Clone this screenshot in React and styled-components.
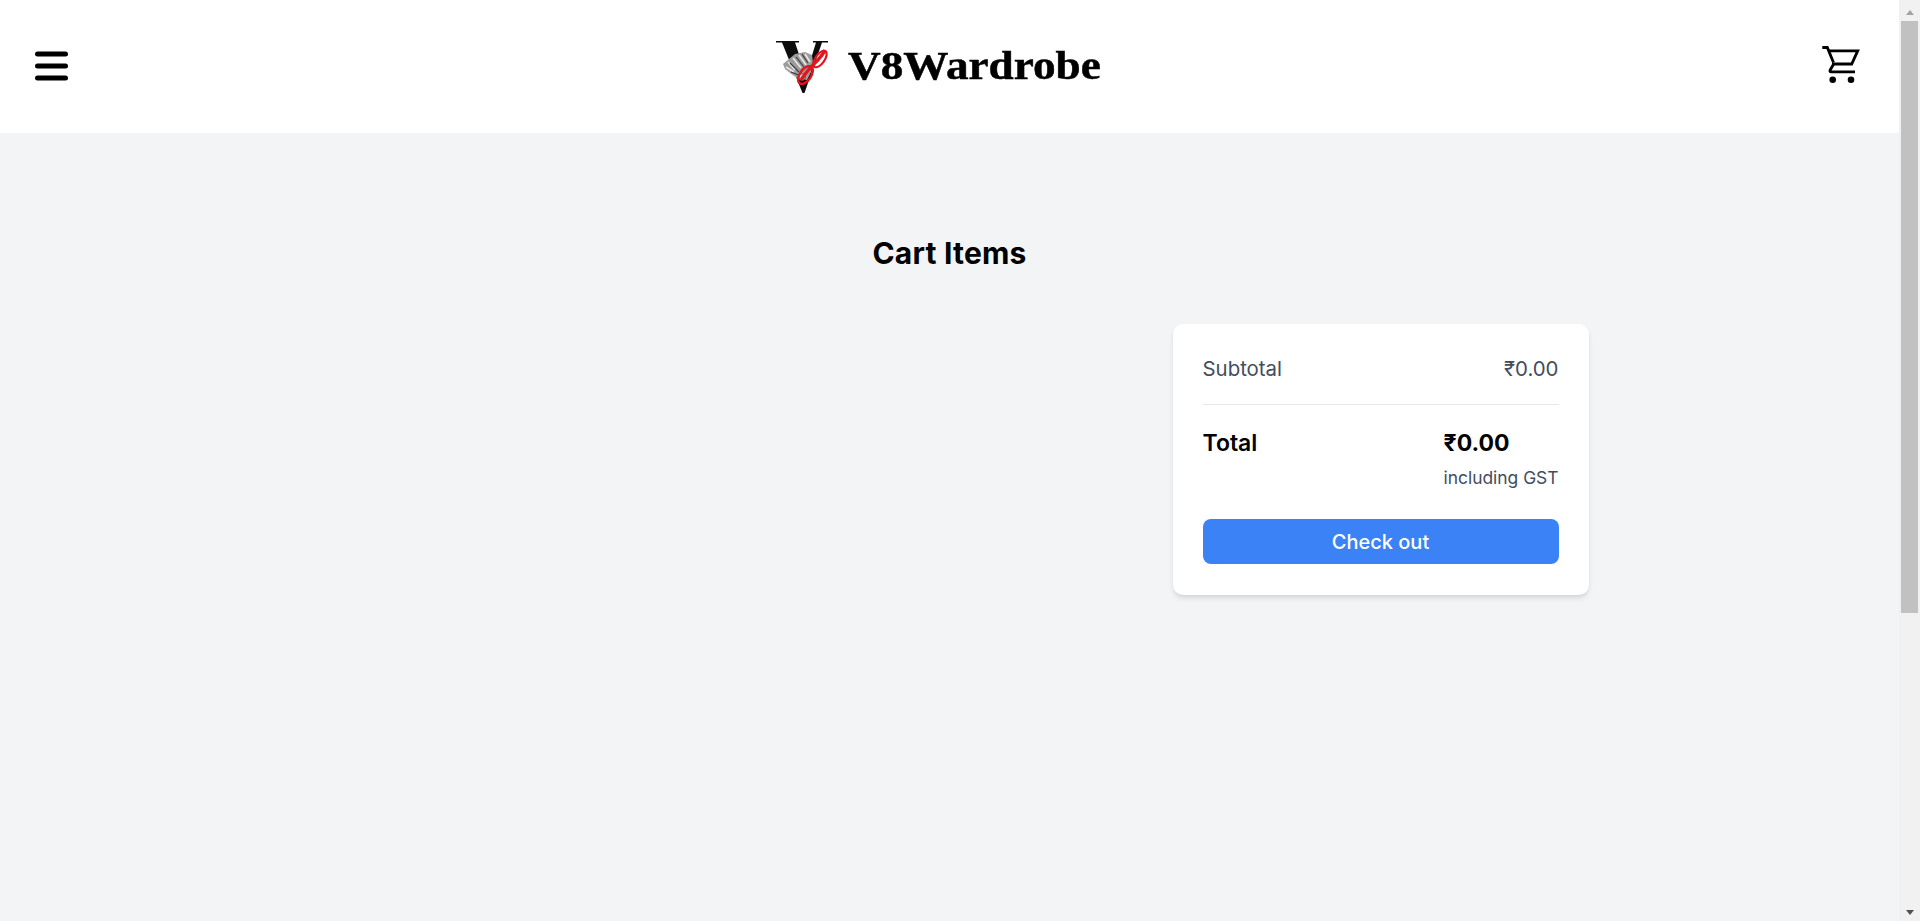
import React from 'react';
import styled, { createGlobalStyle } from 'styled-components';

const GlobalStyle = createGlobalStyle`
  html, body {
    height: 100%;
    overflow: hidden;
  }
  body {
    margin: 0;
    background: #f3f4f6;
    font-family: Inter, "Noto Sans", sans-serif;
    color: #000;
  }
`;

const Page = styled.div`
  display: flex;
  height: 100vh;
`;

const Content = styled.div`
  flex: 1;
  min-width: 0;
`;

// the browser's own bar doesn't show up in the photo, so it is drawn here
const ScrollTrack = styled.div`
  width: 21px;
  flex-shrink: 0;
  display: flex;
  flex-direction: column;
  align-items: center;
  background: #f1f1f1;
  padding: 10px 0 6px;
  box-sizing: border-box;
`;

const ScrollArrow = styled.div`
  width: 0;
  height: 0;
  border-left: 4.5px solid transparent;
  border-right: 4.5px solid transparent;
  border-bottom: ${(p) => (p.$up ? '5px solid #a3a3a3' : '0')};
  border-top: ${(p) => (p.$up ? '0' : '5px solid #505050')};
  margin-top: ${(p) => (p.$up ? '0' : 'auto')};
`;

const ScrollThumb = styled.div`
  width: 17px;
  height: 592px;
  margin-top: 6px;
  background: #c1c1c1;
`;

const Header = styled.header`
  height: 133px;
  box-sizing: border-box;
  background: #fff;
  display: flex;
  align-items: center;
  justify-content: space-between;
  padding: 0 36px 2px 35px;
`;

const MenuButton = styled.svg`
  width: 33px;
  height: 30px;
  display: block;
`;

const CartButton = styled.svg`
  width: 43px;
  height: 43px;
  display: block;
`;

const Brand = styled.div`
  display: flex;
  align-items: center;
  gap: 17px;
  margin-right: 12px;
`;

const LogoMark = styled.svg`
  width: 56px;
  height: 56px;
  margin-top: 2px;
`;

const BrandName = styled.span`
  display: inline-block;
  width: 253px;
  white-space: nowrap;
  font-family: "Liberation Serif", serif;
  font-weight: 700;
  font-size: 40px;
  -webkit-text-stroke: 0.5px #000;
  transform: scaleX(1.13);
  transform-origin: left center;
`;

const Main = styled.main`
  max-width: 1280px;
  margin: 0 auto;
`;

const Title = styled.h1`
  margin: 0;
  padding-top: 100px;
  font-size: 30px;
  line-height: 40px;
  font-weight: 700;
  letter-spacing: 0.2px;
  text-align: center;
`;

const CartRow = styled.div`
  display: flex;
  justify-content: flex-end;
  margin-top: 51px;
  padding-right: 1px;
`;

const Summary = styled.aside`
  width: 416px;
  box-sizing: border-box;
  padding: 30px;
  background: #fff;
  border-radius: 10px;
  box-shadow: 0 4px 6px -1px rgba(0, 0, 0, 0.1), 0 2px 4px -2px rgba(0, 0, 0, 0.1);
`;

const Line = styled.div`
  display: flex;
  justify-content: space-between;
  font-size: 20.4px;
  line-height: 30px;
  color: #434d5e;
`;

const Divider = styled.hr`
  border: 0;
  border-top: 1px solid #e5e7eb;
  margin: 20px 0;
`;

const TotalRow = styled.div`
  display: flex;
  justify-content: space-between;
  align-items: flex-start;
`;

const TotalLabel = styled.span`
  font-size: 23px;
  line-height: 36px;
  font-weight: 600;
`;

const TotalAmount = styled.div`
  font-size: 23px;
  line-height: 36px;
  font-weight: 700;
`;

const TaxNote = styled.div`
  font-size: 17.4px;
  line-height: 28px;
  margin-top: 3px;
  color: #434d5e;
`;

const CheckoutButton = styled.button`
  display: block;
  width: 100%;
  height: 45px;
  margin-top: 27px;
  margin-bottom: 1px;
  border: 0;
  border-radius: 8px;
  background: #3b82f6;
  color: #fff;
  font-family: inherit;
  font-size: 20px;
  font-weight: 500;
`;

// logo drawn by hand, the original is a small raster image
const Logo = () => (
  <LogoMark viewBox="0 0 56 56" aria-label="V8Wardrobe logo">
    <defs>
      <filter id="soft">
        <feGaussianBlur stdDeviation="0.4" />
      </filter>
    </defs>
    <g filter="url(#soft)">
      <path d="M1 2H24V3.5H20L31 36L41 3.5H38V2H53V3.5H47L29.5 54H27.5L7 3.5H1Z" fill="#0b0b0b" />
      <path d="M8 25L14 20L20 15L30 13L37 16L38 24L36 33L32 41L22 39L15 34L10 30Z" fill="#9c9c9c" />
      <path d="M13 23L20 31M18 19L26 29M24 16L31 26M30 15L35 23M11 28L19 33" stroke="#e6e6e6" strokeWidth="1.7" fill="none" />
      <path d="M15 24L24 33M21 18L29 28M27 15L33 24M16 33L26 37" stroke="#3a3a3a" strokeWidth="1.1" fill="none" />
      <circle cx="27" cy="38" r="3.4" fill="#dcdcdc" stroke="#333" strokeWidth="0.8" />
      <ellipse cx="45" cy="20" rx="4.6" ry="9.5" transform="rotate(35 45 20)" fill="none" stroke="#e0131b" strokeWidth="2.2" />
      <ellipse cx="30.5" cy="36" rx="5.6" ry="10" transform="rotate(35 30.5 36)" fill="none" stroke="#e0131b" strokeWidth="2.4" />
      <path d="M50 11C45 22 36 25 26 41" fill="none" stroke="#e0131b" strokeWidth="3.4" />
    </g>
  </LogoMark>
);

export default function App() {
  return (
    <Page>
      <GlobalStyle />
      <Content>
        <Header>
          <MenuButton viewBox="0 0 33 30">
            <g stroke="#000" strokeWidth="5" strokeLinecap="round">
              <line x1="2.5" y1="3" x2="30.5" y2="3" />
              <line x1="2.5" y1="15" x2="30.5" y2="15" />
              <line x1="2.5" y1="27" x2="30.5" y2="27" />
            </g>
          </MenuButton>
          <Brand>
            <Logo />
            <BrandName>V8Wardrobe</BrandName>
          </Brand>
          <CartButton viewBox="0 0 43 43" fill="none" stroke="#000" strokeWidth="2.8">
            <path d="M2.3 3.5H7.3L13.5 18.5" />
            <path d="M8.3 6.9H37.7L31.7 20H12" />
            <path d="M14 19.5L10.2 26C9.6 27.2 10 27.9 11.2 27.9H35" />
            <circle cx="12.7" cy="35.7" r="3.3" fill="#000" stroke="none" />
            <circle cx="31" cy="35.7" r="3.3" fill="#000" stroke="none" />
          </CartButton>
        </Header>
        <Main>
          <Title>Cart Items</Title>
          <CartRow>
            <Summary>
              <Line>
                <span>Subtotal</span>
                <span>₹0.00</span>
              </Line>
              <Divider />
              <TotalRow>
                <TotalLabel>Total</TotalLabel>
                <div>
                  <TotalAmount>₹0.00</TotalAmount>
                  <TaxNote>including GST</TaxNote>
                </div>
              </TotalRow>
              <CheckoutButton>Check out</CheckoutButton>
            </Summary>
          </CartRow>
        </Main>
      </Content>
      <ScrollTrack>
        <ScrollArrow $up />
        <ScrollThumb />
        <ScrollArrow />
      </ScrollTrack>
    </Page>
  );
}
